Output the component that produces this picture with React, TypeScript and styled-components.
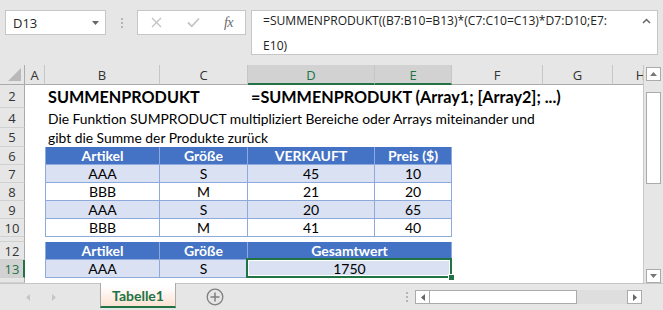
import React from 'react';
import styled, { createGlobalStyle, css } from 'styled-components';

const GREEN = '#217346';
const CHROME = '#e6e6e6';
const CELL_FONT = "'Lato', 'Liberation Sans', sans-serif";
const UI_FONT = "'Open Sans', 'Liberation Sans', sans-serif";

const Global = createGlobalStyle`
  html, body { margin: 0; padding: 0; }
  body { width: 663px; height: 310px; overflow: hidden; background: ${CHROME}; }
`;

const Window = styled.div`
  width: 663px;
  height: 310px;
  display: flex;
  flex-direction: column;
  background: ${CHROME};
  font-family: ${UI_FONT};
  overflow: hidden;
`;

/* ---------- formula bar ---------- */
const TopBar = styled.div`
  height: 65px;
  flex: none;
  display: flex;
  align-items: flex-start;
  padding: 10px 5px 0 5px;
  box-sizing: border-box;
`;

const NameBox = styled.div`
  width: 101px;
  height: 25px;
  box-sizing: border-box;
  border: 1px solid #c6c6c6;
  background: #fff;
  display: flex;
  align-items: center;
  justify-content: space-between;
  padding: 0 6px 0 7px;
  font-size: 13px;
  color: #262626;
`;

const Grip = styled.div`
  width: 31px;
  height: 25px;
  display: flex;
  flex-direction: column;
  align-items: center;
  justify-content: center;
  gap: 2px;
  & > span {
    width: 2px;
    height: 2px;
    background: #b4b4b4;
  }
`;

const FxBox = styled.div`
  width: 109px;
  height: 25px;
  box-sizing: border-box;
  border: 1px solid #c6c6c6;
  background: #fff;
  display: grid;
  grid-template-columns: 37px 37px 35px;
  align-items: center;
  justify-items: center;
`;

const FxText = styled.span`
  font-family: 'Liberation Serif', serif;
  font-style: italic;
  font-size: 14px;
  color: #6a6a6a;
  letter-spacing: -0.5px;
  padding-right: 2px;
`;

const FormulaBox = styled.div`
  margin-left: 5px;
  width: 407px;
  height: 45px;
  box-sizing: border-box;
  border: 1px solid #c6c6c6;
  background: #fff;
  display: flex;
  align-items: flex-start;
  padding: 0 6px 0 11px;
`;

const FormulaText = styled.div`
  flex: 1;
  margin-top: -3px;
  margin-right: 24px;
  font-size: 12.1px;
  line-height: 25px;
  color: #222;
  overflow-wrap: normal;
`;

const Caret = styled.div`
  width: 10px;
  padding-top: 7px;
  display: flex;
  justify-content: center;
`;

/* ---------- sheet ---------- */
const SheetArea = styled.div`
  flex: none;
  height: 218px;
  display: flex;
`;

const Grid = styled.div`
  width: 644px;
  box-sizing: border-box;
  border-right: 1px solid #c8c8c8;
  overflow: hidden;
  background: #fff;
  display: grid;
  grid-template-columns: 25px 20px 115px 88px 127px 77px 91px 70px 56px;
  grid-template-rows: 20px 23px 20px 19px 18px 18px 18px 18px 18px 5px 18px 18px 5px;
`;

const Corner = styled.div`
  background: ${CHROME};
  border-right: 1px solid #ababab;
  border-bottom: 1px solid #ababab;
  box-sizing: border-box;
  display: flex;
  align-items: flex-end;
  justify-content: flex-end;
  padding: 0 3px 3px 0;
`;

const ColHead = styled.div<{ $active?: boolean }>`
  box-sizing: border-box;
  background: ${p => (p.$active ? '#d2d2d2' : CHROME)};
  border-right: 1px solid #c6c6c6;
  border-bottom: ${p => (p.$active ? `2px solid ${GREEN}` : '1px solid #ababab')};
  display: flex;
  align-items: center;
  justify-content: center;
  font-size: 13px;
  color: ${p => (p.$active ? GREEN : '#333')};
  padding-top: ${p => (p.$active ? '1px' : '0')};
`;

const RowHead = styled.div<{ $active?: boolean }>`
  box-sizing: border-box;
  background: ${p => (p.$active ? '#d2d2d2' : CHROME)};
  border-right: ${p => (p.$active ? `2px solid ${GREEN}` : '1px solid #ababab')};
  border-bottom: 1px solid #d0d0d0;
  display: flex;
  align-items: center;
  justify-content: center;
  overflow: hidden;
  font-size: 13px;
  color: ${p => (p.$active ? GREEN : '#333')};
  padding-left: ${p => (p.$active ? '1px' : '0')};
`;

type Tone = 'head' | 'odd' | 'even';

const Cell = styled.div<{ $tone?: Tone; $span?: number; $first?: boolean; $selected?: boolean }>`
  grid-column: span ${p => p.$span ?? 1};
  box-sizing: border-box;
  position: relative;
  display: flex;
  align-items: center;
  justify-content: center;
  white-space: nowrap;
  font-family: ${CELL_FONT};
  font-size: 14px;
  color: #000;
  ${p =>
    p.$tone &&
    css`
      border-right: 1px solid #8ea9db;
      border-bottom: 1px solid #8ea9db;
      ${p.$first ? 'border-left: 1px solid #8ea9db;' : ''}
    `}
  ${p =>
    p.$tone === 'head' &&
    css`
      background: #4472c4;
      color: #fff;
      font-weight: 700;
    `}
  ${p => p.$tone === 'odd' && 'background: #d9e1f2;'}
  ${p => p.$tone === 'even' && 'background: #fff;'}
  ${p =>
    p.$selected &&
    css`
      &::after {
        content: '';
        position: absolute;
        left: -2px;
        top: -2px;
        right: -1px;
        bottom: -1px;
        border: 2px solid ${GREEN};
        box-shadow: inset 0 0 0 1px #fff;
      }
      &::before {
        content: '';
        position: absolute;
        right: -4px;
        bottom: -4px;
        width: 5px;
        height: 5px;
        background: ${GREEN};
        border: 1px solid #fff;
        z-index: 2;
      }
    `}
`;

const TextCell = styled.div<{ $span: number; $title?: boolean }>`
  grid-column: span ${p => p.$span};
  display: flex;
  align-items: center;
  padding-left: 3px;
  white-space: nowrap;
  font-family: ${CELL_FONT};
  font-size: ${p => (p.$title ? '16.2px' : '13.85px')};
  font-weight: ${p => (p.$title ? 700 : 400)};
  color: #000;
`;

const Empty = styled.div<{ $span?: number }>`
  grid-column: span ${p => p.$span ?? 1};
`;

/* ---------- scrollbars ---------- */
const VScroll = styled.div`
  width: 19px;
  display: flex;
  flex-direction: column;
  padding: 2px 0 0 2px;
  box-sizing: border-box;
`;

const ScrollBtn = styled.div<{ $push?: boolean }>`
  width: 15px;
  height: 14px;
  box-sizing: border-box;
  border: 1px solid #ababab;
  background: #fff;
  display: flex;
  align-items: center;
  justify-content: center;
  flex: none;
  ${p => p.$push && 'margin-top: auto;'}
`;

const VThumb = styled.div`
  width: 15px;
  height: 92px;
  margin-top: 11px;
  box-sizing: border-box;
  border: 1px solid #ababab;
  background: #fff;
`;

/* ---------- tab bar ---------- */
const TabBar = styled.div`
  flex: 1;
  display: flex;
  align-items: flex-start;
  border-top: 1px solid #c6c6c6;
  box-sizing: border-box;
`;

const NavArrows = styled.div`
  width: 100px;
  height: 26px;
  display: flex;
  align-items: center;
  padding-left: 26px;
  box-sizing: border-box;
  gap: 22px;
`;

const Tab = styled.div`
  width: 76px;
  height: 25px;
  margin-top: -1px;
  box-sizing: border-box;
  border-left: 1px solid #ababab;
  border-right: 1px solid #ababab;
  border-bottom: 2px solid ${GREEN};
  background: linear-gradient(#ffffff 15%, #fbe2d3);
  display: flex;
  align-items: center;
  justify-content: center;
  font-family: ${CELL_FONT};
  font-weight: 700;
  font-size: 14px;
  color: ${GREEN};
  padding-top: 1px;
`;

const AddSheet = styled.div`
  margin-left: 30px;
  height: 26px;
  display: flex;
  align-items: center;
`;

const BarGrip = styled.div`
  margin-left: auto;
  width: 16px;
  height: 26px;
  display: flex;
  flex-direction: column;
  align-items: center;
  justify-content: center;
  gap: 2px;
  & > span {
    width: 2px;
    height: 2px;
    background: #b4b4b4;
  }
`;

const HScroll = styled.div`
  margin-top: 6px;
  margin-right: 21px;
  width: 227px;
  height: 14px;
  display: flex;
  background: #dedede;
`;

const HBtn = styled.div`
  width: 15px;
  height: 14px;
  box-sizing: border-box;
  border: 1px solid #ababab;
  background: #fff;
  display: flex;
  align-items: center;
  justify-content: center;
`;

const HThumb = styled.div`
  width: 147px;
  height: 14px;
  box-sizing: border-box;
  border: 1px solid #ababab;
  border-left: none;
  background: #fff;
`;

const HTrack = styled.div`
  flex: 1;
`;

/* ---------- icons ---------- */
const Tri = ({ dir, color = '#666', w = 7, h = 4 }: { dir: 'up' | 'down' | 'left' | 'right'; color?: string; w?: number; h?: number }) => {
  const pts: Record<string, string> = {
    up: `0,${h} ${w},${h} ${w / 2},0`,
    down: `0,0 ${w},0 ${w / 2},${h}`,
    left: `${w},0 ${w},${h} 0,${h / 2}`,
    right: `0,0 0,${h} ${w},${h / 2}`,
  };
  return (
    <svg width={w} height={h} viewBox={`0 0 ${w} ${h}`}>
      <polygon points={pts[dir]} fill={color} />
    </svg>
  );
};

const CrossIcon = () => (
  <svg width="11" height="11" viewBox="0 0 11 11">
    <path d="M1 1 L10 10 M10 1 L1 10" stroke="#c4c4c4" strokeWidth="1.4" fill="none" />
  </svg>
);

const CheckIcon = () => (
  <svg width="13" height="11" viewBox="0 0 13 11">
    <path d="M1 5.5 L4.8 9.3 L12 1.5" stroke="#c4c4c4" strokeWidth="1.8" fill="none" />
  </svg>
);

const ChevronUp = () => (
  <svg width="9" height="6" viewBox="0 0 9 6">
    <path d="M1 5 L4.5 1.5 L8 5" stroke="#666" strokeWidth="1.5" fill="none" />
  </svg>
);

const PlusCircle = () => (
  <svg width="18" height="18" viewBox="0 0 18 18">
    <circle cx="9" cy="9" r="7.8" stroke="#7f7f7f" strokeWidth="1.3" fill="none" />
    <path d="M9 4.5 V13.5 M4.5 9 H13.5" stroke="#7f7f7f" strokeWidth="1.5" />
  </svg>
);

const CornerTri = () => (
  <svg width="13" height="13" viewBox="0 0 13 13">
    <polygon points="13,0 13,13 0,13" fill="#b9b9b9" />
  </svg>
);

/* ---------- data ---------- */
const colLetters = ['A', 'B', 'C', 'D', 'E', 'F', 'G', 'H'];
const activeCols = ['D', 'E'];

const dataRows: { n: string; vals: string[] }[] = [
  { n: '7', vals: ['AAA', 'S', '45', '10'] },
  { n: '8', vals: ['BBB', 'M', '21', '20'] },
  { n: '9', vals: ['AAA', 'S', '20', '65'] },
  { n: '10', vals: ['BBB', 'M', '41', '40'] },
];

export default function App() {
  return (
    <>
      <Global />
      <Window>
        <TopBar>
          <NameBox>
            <span>D13</span>
            <Tri dir="down" />
          </NameBox>
          <Grip>
            <span />
            <span />
            <span />
          </Grip>
          <FxBox>
            <CrossIcon />
            <CheckIcon />
            <FxText>fx</FxText>
          </FxBox>
          <FormulaBox>
            <FormulaText>
              =SUMMENPRODUKT((B7:B10=B13)*(C7:C10=C13)*D7:D10;E7:<wbr />E10)
            </FormulaText>
            <Caret>
              <ChevronUp />
            </Caret>
          </FormulaBox>
        </TopBar>

        <SheetArea>
          <Grid>
            <Corner>
              <CornerTri />
            </Corner>
            {colLetters.map(c => (
              <ColHead key={c} $active={activeCols.includes(c)}>
                {c}
              </ColHead>
            ))}

            <RowHead>2</RowHead>
            <Empty />
            <TextCell $span={2} $title>
              SUMMENPRODUKT
            </TextCell>
            <TextCell $span={5} $title>
              =SUMMENPRODUKT (Array1; [Array2]; ...)
            </TextCell>

            <RowHead>4</RowHead>
            <Empty />
            <TextCell $span={7}>Die Funktion SUMPRODUCT multipliziert Bereiche oder Arrays miteinander und</TextCell>

            <RowHead>5</RowHead>
            <Empty />
            <TextCell $span={7}>gibt die Summe der Produkte zurück</TextCell>

            <RowHead>6</RowHead>
            <Empty />
            <Cell $tone="head" $first>
              Artikel
            </Cell>
            <Cell $tone="head">Größe</Cell>
            <Cell $tone="head">VERKAUFT</Cell>
            <Cell $tone="head">Preis ($)</Cell>
            <Empty $span={3} />

            {dataRows.map((r, i) => (
              <React.Fragment key={r.n}>
                <RowHead>{r.n}</RowHead>
                <Empty />
                {r.vals.map((v, j) => (
                  <Cell key={j} $tone={i % 2 === 0 ? 'odd' : 'even'} $first={j === 0}>
                    {v}
                  </Cell>
                ))}
                <Empty $span={3} />
              </React.Fragment>
            ))}

            <RowHead />
            <Empty $span={8} />

            <RowHead>12</RowHead>
            <Empty />
            <Cell $tone="head" $first>
              Artikel
            </Cell>
            <Cell $tone="head">Größe</Cell>
            <Cell $tone="head" $span={2}>
              Gesamtwert
            </Cell>
            <Empty $span={3} />

            <RowHead $active>13</RowHead>
            <Empty />
            <Cell $tone="odd" $first>
              AAA
            </Cell>
            <Cell $tone="odd">S</Cell>
            <Cell $tone="odd" $span={2} $selected>
              1750
            </Cell>
            <Empty $span={3} />

            <RowHead />
            <Empty $span={8} />
          </Grid>
          <VScroll>
            <ScrollBtn>
              <Tri dir="up" color="#777" />
            </ScrollBtn>
            <VThumb />
            <ScrollBtn $push>
              <Tri dir="down" color="#777" />
            </ScrollBtn>
          </VScroll>
        </SheetArea>

        <TabBar>
          <NavArrows>
            <Tri dir="left" color="#c6c6c6" w={4} h={7} />
            <Tri dir="right" color="#c6c6c6" w={4} h={7} />
          </NavArrows>
          <Tab>Tabelle1</Tab>
          <AddSheet>
            <PlusCircle />
          </AddSheet>
          <BarGrip>
            <span />
            <span />
            <span />
          </BarGrip>
          <HScroll>
            <HBtn>
              <Tri dir="left" color="#666" w={4} h={7} />
            </HBtn>
            <HThumb />
            <HTrack />
            <HBtn>
              <Tri dir="right" color="#666" w={4} h={7} />
            </HBtn>
          </HScroll>
        </TabBar>
      </Window>
    </>
  );
}
